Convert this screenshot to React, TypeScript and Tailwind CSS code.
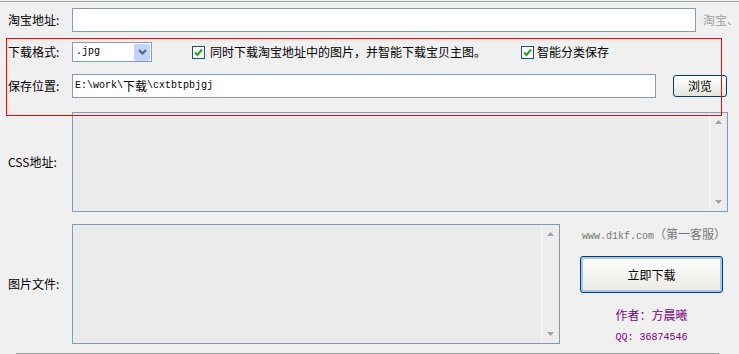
import React from 'react';

const cjk = { fontFamily: '"Noto Sans CJK SC", "Liberation Sans", sans-serif' };

const Check = () => (
  <span className="flex h-[13px] w-[13px] items-center justify-center border border-[#1c5180] bg-white">
    <svg width="9" height="9" viewBox="0 0 9 9">
      <path d="M1 4.5 L3.5 7 L8 1.5" fill="none" stroke="#21a121" strokeWidth="2" />
    </svg>
  </span>
);

const ScrollBar = ({ className }: { className: string }) => (
  <div className={`flex flex-col items-center justify-between border-l border-[#f8f8f8] bg-[#ededed] py-[6px] ${className}`}>
    <svg width="7" height="4" viewBox="0 0 7 4">
      <path d="M0 4 L3.5 0 L7 4 Z" fill="#a0a0a0" />
    </svg>
    <svg width="7" height="4" viewBox="0 0 7 4">
      <path d="M0 0 L3.5 4 L7 0 Z" fill="#a0a0a0" />
    </svg>
  </div>
);

const Label = ({ children }: { children: React.ReactNode }) => (
  <span className="w-[72px] shrink-0 pl-[8px] text-[12px] text-black">{children}</span>
);

export default function App() {
  return (
    <div
      className="relative h-[354px] w-[739px] overflow-hidden bg-[#f0f0f0] text-[12px] leading-none text-black"
      style={cjk}
    >
      <div className="mt-px h-px w-full bg-[#a0a0a0]" />

      {/* 淘宝地址 */}
      <div className="mt-[6px] flex items-center whitespace-nowrap">
        <Label>淘宝地址:</Label>
        <div className="h-[24px] w-[624px] shrink-0 border border-[#7f9db9] bg-white" />
        <span className="ml-[7px] text-[#a0a0a0]">淘宝、</span>
      </div>

      {/* 下载格式 */}
      <div className="mt-[10px] flex items-center whitespace-nowrap">
        <Label>下载格式:</Label>
        <div className="flex h-[20px] w-[80px] shrink-0 items-center justify-between border border-[#7f9db9] bg-white pl-[3px] pr-px">
          <span className="font-['Liberation_Mono'] text-[10px]">.jpg</span>
          <span className="flex h-[17px] w-[16px] items-center justify-center rounded-[2px] bg-[#c3d4fc]">
            <svg width="9" height="6" viewBox="0 0 9 6">
              <path d="M1 1 L4.5 4.5 L8 1" fill="none" stroke="#4d6185" strokeWidth="2" />
            </svg>
          </span>
        </div>
        <span className="ml-[40px]">
          <Check />
        </span>
        <span className="ml-[5px]">同时下载淘宝地址中的图片，并智能下载宝贝主图。</span>
        <span className="ml-[35px]">
          <Check />
        </span>
        <span className="ml-[3px]">智能分类保存</span>
      </div>

      {/* 保存位置 */}
      <div className="mt-[12px] flex items-center whitespace-nowrap">
        <Label>保存位置:</Label>
        <div className="flex h-[24px] w-[584px] shrink-0 items-center border border-[#7f9db9] bg-white pl-[2px]">
          <span className="font-['Liberation_Mono'] text-[10px]">E:\work\</span>
          <span>下载</span>
          <span className="font-['Liberation_Mono'] text-[10px]">\cxtbtpbjgj</span>
        </div>
        <button className="ml-[17px] flex h-[22px] w-[54px] items-center justify-center rounded-[3px] border border-[#003c74] bg-gradient-to-b from-white to-[#e6e5de] text-[12px]">
          浏览
        </button>
      </div>

      {/* CSS地址 */}
      <div className="mt-[14px] flex items-center whitespace-nowrap">
        <Label>CSS地址:</Label>
        <div className="flex h-[100px] w-[656px] shrink-0 justify-end border border-[#7f9db9] bg-[#ebebeb] p-px">
          <ScrollBar className="w-[17px]" />
        </div>
      </div>

      {/* 图片文件 */}
      <div className="mt-[12px] flex whitespace-nowrap">
        <div className="flex items-center">
          <Label>图片文件:</Label>
          <div className="flex h-[120px] w-[488px] shrink-0 justify-end border border-[#7f9db9] bg-[#ebebeb] p-px">
            <ScrollBar className="w-[17px]" />
          </div>
        </div>
        <div className="ml-[20px] flex w-[143px] flex-col items-center">
          <div className="mt-[4px] pl-[5px] text-[#777]">
            <span className="font-['Liberation_Mono'] text-[10px]">www.d1kf.com</span>
            <span>（第一客服）</span>
          </div>
          <button className="mt-[14px] flex h-[37px] w-[143px] items-center justify-center rounded-[3px] border border-[#003c74] bg-gradient-to-b from-[#fefefe] to-[#ecebe6] text-[12px] shadow-[inset_0_0_0_2px_#a9c6f0]">
            立即下载
          </button>
          <div className="mt-[16px] text-[#800080]">作者：方晨曦</div>
          <div className="mt-[12px] font-['Liberation_Mono'] text-[10px] text-[#800080]">QQ: 36874546</div>
        </div>
      </div>

      <div className="ml-[16px] mt-[9px] h-px w-[703px] bg-[#a0a0a0]" />

      {/* 高亮框 */}
      <div className="absolute left-[6px] top-[38px] h-[78px] w-[716px] border border-[#ff0000]" />
    </div>
  );
}
